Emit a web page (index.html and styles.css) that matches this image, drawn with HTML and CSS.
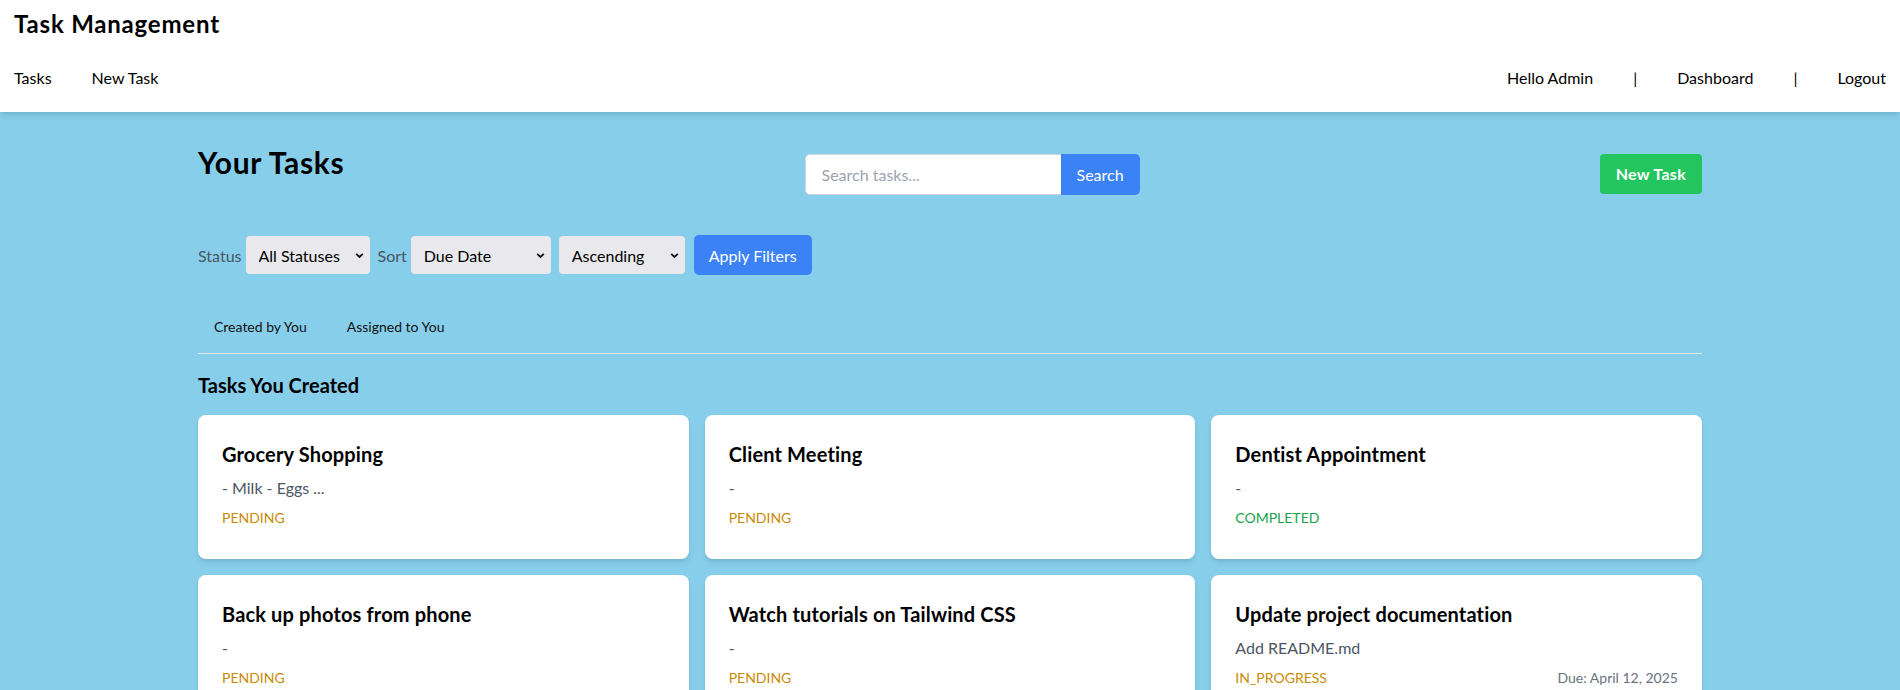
FILE: index.html
```html
<!DOCTYPE html>
<html lang="en">
<head>
<meta charset="utf-8">
<title>Task Management</title>
<link rel="stylesheet" href="styles.css">
</head>
<body>
<header class="topbar">
  <h1 class="brand">Task Management</h1>
  <nav class="nav">
    <div class="nav-group">
      <a href="#" class="nav-link">Tasks</a>
      <a href="#" class="nav-link">New Task</a>
    </div>
    <div class="nav-group">
      <span class="nav-link">Hello Admin</span>
      <span class="nav-sep">|</span>
      <a href="#" class="nav-link">Dashboard</a>
      <span class="nav-sep">|</span>
      <a href="#" class="nav-link">Logout</a>
    </div>
  </nav>
</header>

<main class="container">
  <div class="toolbar">
    <h2 class="page-title">Your Tasks</h2>
    <form class="search">
      <input class="search-input" type="text" placeholder="Search tasks...">
      <button class="search-btn" type="button">Search</button>
    </form>
    <a href="#" class="btn-new">New Task</a>
  </div>

  <form class="filters">
    <label class="filter-label">Status</label>
    <select class="select select-status">
      <option>All Statuses</option>
    </select>
    <label class="filter-label">Sort</label>
    <select class="select select-sort">
      <option>Due Date</option>
    </select>
    <select class="select select-order">
      <option>Ascending</option>
    </select>
    <button class="btn-apply" type="button">Apply Filters</button>
  </form>

  <div class="tabs">
    <button class="tab" type="button">Created by You</button>
    <button class="tab" type="button">Assigned to You</button>
  </div>

  <h3 class="section-title">Tasks You Created</h3>

  <div class="grid">
    <div class="card">
      <h4 class="card-title">Grocery Shopping</h4>
      <p class="card-desc">- Milk - Eggs ...</p>
      <div class="card-meta"><span class="status pending">PENDING</span></div>
    </div>
    <div class="card">
      <h4 class="card-title">Client Meeting</h4>
      <p class="card-desc">-</p>
      <div class="card-meta"><span class="status pending">PENDING</span></div>
    </div>
    <div class="card">
      <h4 class="card-title">Dentist Appointment</h4>
      <p class="card-desc">-</p>
      <div class="card-meta"><span class="status completed">COMPLETED</span></div>
    </div>
    <div class="card">
      <h4 class="card-title">Back up photos from phone</h4>
      <p class="card-desc">-</p>
      <div class="card-meta"><span class="status pending">PENDING</span></div>
    </div>
    <div class="card">
      <h4 class="card-title">Watch tutorials on Tailwind CSS</h4>
      <p class="card-desc">-</p>
      <div class="card-meta"><span class="status pending">PENDING</span></div>
    </div>
    <div class="card">
      <h4 class="card-title">Update project documentation</h4>
      <p class="card-desc">Add README.md</p>
      <div class="card-meta"><span class="status pending">IN_PROGRESS</span><span class="due">Due: April 12, 2025</span></div>
    </div>
  </div>
</main>
</body>
</html>
```

FILE: styles.css
```css
* { box-sizing: border-box; }

html, body {
  margin: 0;
  padding: 0;
}

body {
  background: #87ceeb;
  font-family: "Lato", "Open Sans", "Liberation Sans", sans-serif;
  color: #111;
}

a { color: inherit; text-decoration: none; }

.topbar {
  background: #ffffff;
  padding: 8px 14px 22px 14px;
  box-shadow: 0 4px 6px -1px rgba(0,0,0,0.1), 0 2px 4px -2px rgba(0,0,0,0.1);
}

.brand {
  margin: 0;
  font-size: 24px;
  line-height: 32px;
  font-weight: 700;
  letter-spacing: 0.8px;
  color: #000;
}

.nav {
  margin-top: 26px;
  display: flex;
  justify-content: space-between;
  align-items: center;
}

.nav-group {
  display: flex;
  align-items: center;
  gap: 40px;
}

.nav-link, .nav-sep {
  font-size: 16px;
  line-height: 24px;
  color: #000;
}

.container {
  max-width: 1536px;
  margin: 0 auto;
  padding: 32px 16px;
}

.toolbar {
  display: flex;
  justify-content: space-between;
  align-items: center;
}

.page-title {
  margin: 0 0 24px 0;
  font-size: 30px;
  line-height: 36px;
  font-weight: 700;
  letter-spacing: 0.7px;
  color: #000;
}

.search {
  display: flex;
  margin: 0;
}

.search-input {
  width: 256px;
  height: 41px;
  padding: 8px 16px;
  border: 1px solid #d1d5db;
  border-right: none;
  border-radius: 5px 0 0 5px;
  font-family: inherit;
  font-size: 16px;
  background: #fff;
  outline: none;
}

.search-input::placeholder { color: #9ca3af; }

.search-btn {
  height: 41px;
  padding: 0 16px;
  border: none;
  border-radius: 0 5px 5px 0;
  background: #3b82f6;
  color: #fff;
  font-family: inherit;
  font-size: 16px;
}

.btn-new {
  display: inline-block;
  padding: 8px 16px;
  line-height: 24px;
  border-radius: 4px;
  background: #22c55e;
  color: #fff;
  font-weight: 700;
  font-size: 16px;
  letter-spacing: 0.3px;
}

.filters {
  margin: 31px 0 0 0;
  display: flex;
  align-items: center;
}

.filter-label {
  font-size: 16px;
  color: #4b5563;
  margin-right: 4px;
}

.select {
  appearance: none;
  -webkit-appearance: none;
  height: 38px;
  border: none;
  border-radius: 4px;
  background-color: #e9e9ed;
  background-image: url("data:image/svg+xml,%3Csvg xmlns='http://www.w3.org/2000/svg' width='9' height='7' viewBox='0 0 9 7'%3E%3Cpath d='M1.2 1.8 L4.5 5 L7.8 1.8' fill='none' stroke='%23111' stroke-width='1.8'/%3E%3C/svg%3E");
  background-repeat: no-repeat;
  background-position: right 6px center;
  padding: 0 20px 0 13px;
  font-family: inherit;
  font-size: 16px;
  color: #000;
  margin-right: 8px;
}

.select-status { width: 124px; }
.select-sort { width: 140px; }
.select-order { width: 126px; margin-right: 9px; }

.btn-apply {
  height: 40px;
  padding: 0 15px;
  border: none;
  border-radius: 5px;
  background: #3b82f6;
  color: #fff;
  font-family: inherit;
  font-size: 16px;
}

.tabs {
  margin-top: 25px;
  display: flex;
  gap: 8px;
  border-bottom: 1px solid #e5e7eb;
}

.tab {
  background: none;
  border: none;
  padding: 17px 16px 16px 16px;
  font-family: inherit;
  font-size: 14px;
  line-height: 20px;
  color: #111;
}

.section-title {
  margin: 17px 0 16px 0;
  font-size: 20px;
  line-height: 28px;
  font-weight: 700;
  color: #000;
}

.grid {
  display: grid;
  grid-template-columns: repeat(3, 1fr);
  gap: 16px;
}

.card {
  background: #fff;
  border-radius: 8px;
  padding: 25px 24px 31px 24px;
  box-shadow: 0 4px 6px -1px rgba(0,0,0,0.1), 0 2px 4px -2px rgba(0,0,0,0.1);
}

.card-title {
  margin: 0;
  font-size: 20px;
  line-height: 28px;
  font-weight: 700;
  letter-spacing: 0.15px;
  color: #000;
}

.card-desc {
  margin: 8px 0 0 0;
  font-size: 16px;
  line-height: 24px;
  color: #4b5563;
}

.card-meta {
  margin-top: 8px;
  display: flex;
  justify-content: space-between;
  align-items: center;
  font-size: 14px;
  line-height: 20px;
}

.status.pending { color: #ca8a04; }
.status.completed { color: #16a34a; }

.due { color: #6b7280; }
```
